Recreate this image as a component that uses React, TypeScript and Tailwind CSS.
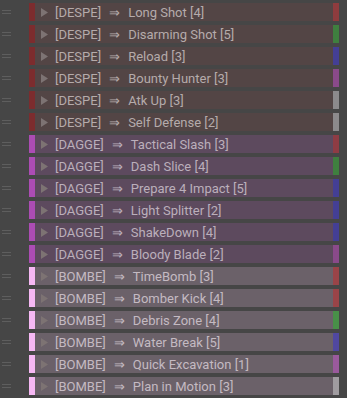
import React from "react";

type Row = { tag: string; name: string; bar: string };

const groups: { strip: string; bg: string; text: string; rows: Row[] }[] = [
  {
    strip: "bg-[#7c2c2e]",
    bg: "bg-[#534545]",
    text: "text-[#b5abab]",
    rows: [
      { tag: "[DESPE]", name: "Long Shot [4]", bar: "bg-[#8e3c3e]" },
      { tag: "[DESPE]", name: "Disarming Shot [5]", bar: "bg-[#3f7f3f]" },
      { tag: "[DESPE]", name: "Reload [3]", bar: "bg-[#443f95]" },
      { tag: "[DESPE]", name: "Bounty Hunter [3]", bar: "bg-[#8a4a8a]" },
      { tag: "[DESPE]", name: "Atk Up [3]", bar: "bg-[#8c8a8c]" },
      { tag: "[DESPE]", name: "Self Defense [2]", bar: "bg-[#8c8a8c]" },
    ],
  },
  {
    strip: "bg-[#ac4cb4]",
    bg: "bg-[#5d4a5e]",
    text: "text-[#bbafbb]",
    rows: [
      { tag: "[DAGGE]", name: "Tactical Slash [3]", bar: "bg-[#8e3c44]" },
      { tag: "[DAGGE]", name: "Dash Slice [4]", bar: "bg-[#3f7f3f]" },
      { tag: "[DAGGE]", name: "Prepare 4 Impact [5]", bar: "bg-[#443f95]" },
      { tag: "[DAGGE]", name: "Light Splitter [2]", bar: "bg-[#443f95]" },
      { tag: "[DAGGE]", name: "ShakeDown [4]", bar: "bg-[#443f95]" },
      { tag: "[DAGGE]", name: "Bloody Blade [2]", bar: "bg-[#8a4a8a]" },
    ],
  },
  {
    strip: "bg-[#f6b8f4]",
    bg: "bg-[#6b6169]",
    text: "text-[#c4bac2]",
    rows: [
      { tag: "[BOMBE]", name: "TimeBomb [3]", bar: "bg-[#9a4448]" },
      { tag: "[BOMBE]", name: "Bomber Kick [4]", bar: "bg-[#9a4448]" },
      { tag: "[BOMBE]", name: "Debris Zone [4]", bar: "bg-[#489048]" },
      { tag: "[BOMBE]", name: "Water Break [5]", bar: "bg-[#5048a0]" },
      { tag: "[BOMBE]", name: "Quick Excavation [1]", bar: "bg-[#9a5a9c]" },
      { tag: "[BOMBE]", name: "Plan in Motion [3]", bar: "bg-[#a09ca0]" },
    ],
  },
];

function Handle() {
  return (
    <div className="w-[29px] h-full flex flex-col justify-center pl-[2px] gap-[2px]">
      <div className="w-[9px] h-[1px] bg-[#5e5e5e]" />
      <div className="w-[9px] h-[1px] bg-[#5e5e5e]" />
    </div>
  );
}

export default function App() {
  return (
    <div
      className="w-[347px] h-[398px] bg-[#464646] pt-[3px] flex flex-col gap-[4px] overflow-hidden"
      style={{ fontFamily: "Roboto, 'Liberation Sans', sans-serif" }}
    >
      {groups.map((g, gi) =>
        g.rows.map((r, i) => (
          <div key={`${gi}-${i}`} className="flex h-[18px] items-stretch">
            <Handle />
            <div className={`w-[6px] ${g.strip}`} />
            <div className={`flex-1 mr-[8px] flex items-center ${g.bg}`}>
              <svg width="8" height="9" viewBox="0 0 8 9" className="ml-[6px] mr-[6px]">
                <polygon points="0,0 7,4.5 0,9" fill="#7d7373" />
              </svg>
              <span className={`text-[13px] leading-none whitespace-nowrap ${g.text}`}>{r.tag}</span>
              <span className={`text-[13px] leading-none ml-[8px] mr-[8px] ${g.text}`}>⇒</span>
              <span className={`text-[13px] leading-none whitespace-nowrap flex-1 ${g.text}`}>{r.name}</span>
              <div className={`w-[6px] h-full ${r.bar}`} />
            </div>
          </div>
        ))
      )}
    </div>
  );
}
